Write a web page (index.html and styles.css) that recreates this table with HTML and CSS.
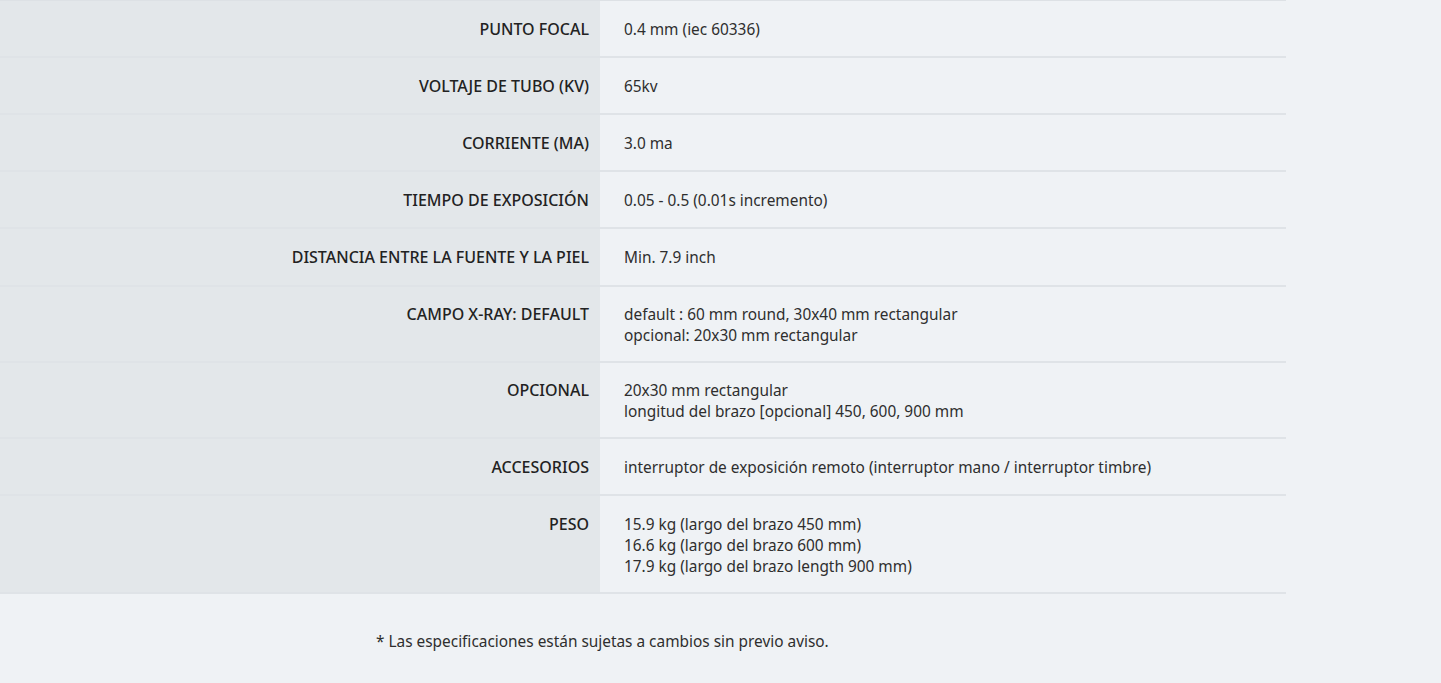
FILE: index.html
```html
<!DOCTYPE html>
<html lang="es">
<head>
<meta charset="utf-8">
<title>Especificaciones</title>
<link rel="stylesheet" href="styles.css">
</head>
<body>
<div class="page">
  <table class="specs">
    <tbody>
      <tr><th>PUNTO FOCAL</th><td>0.4 mm (iec 60336)</td></tr>
      <tr><th>VOLTAJE DE TUBO (KV)</th><td>65kv</td></tr>
      <tr><th>CORRIENTE (MA)</th><td>3.0 ma</td></tr>
      <tr><th>TIEMPO DE EXPOSICIÓN</th><td>0.05 - 0.5 (0.01s incremento)</td></tr>
      <tr class="tall"><th>DISTANCIA ENTRE LA FUENTE Y LA PIEL</th><td>Min. 7.9 inch</td></tr>
      <tr class="two"><th>CAMPO X-RAY: DEFAULT</th><td>default : 60 mm round, 30x40 mm rectangular<br>opcional: 20x30 mm rectangular</td></tr>
      <tr class="two"><th>OPCIONAL</th><td>20x30 mm rectangular<br>longitud del brazo [opcional] 450, 600, 900 mm</td></tr>
      <tr><th>ACCESORIOS</th><td>interruptor de exposición remoto (interruptor mano / interruptor timbre)</td></tr>
      <tr class="three"><th>PESO</th><td>15.9 kg (largo del brazo 450 mm)<br>16.6 kg (largo del brazo 600 mm)<br>17.9 kg (largo del brazo length 900 mm)</td></tr>
    </tbody>
  </table>
  <p class="note">* Las especificaciones están sujetas a cambios sin previo aviso.</p>
</div>
</body>
</html>
```

FILE: styles.css
```css
html, body {
  margin: 0;
  padding: 0;
  background: #eff2f5;
}
body {
  font-family: "Noto Sans", "Open Sans", sans-serif;
  color: #2e2e2e;
  font-size: 15.4px;
}
.page {
  width: 1441px;
  height: 683px;
  overflow: hidden;
}
.specs {
  width: 1286px;
  border-collapse: collapse;
  border-top: 1px solid #dde1e5;
}
.specs tr {
  border-bottom: 2px solid #dfe3e7;
}
.specs th, .specs td {
  vertical-align: top;
  padding: 18px 0 16px 0;
  line-height: 21px;
}
.specs th {
  width: 589px;
  padding-right: 11px;
  background: #e3e7ea;
  text-align: right;
  font-weight: 500;
  font-size: 16px;
  color: #222;
}
.specs td {
  background: #eff2f5;
  padding-left: 24px;
  text-align: left;
}
.specs tr.tall th, .specs tr.tall td {
  padding-bottom: 17px;
}
.specs tr.two th, .specs tr.two td {
  padding-top: 17px;
  padding-bottom: 15px;
}
.specs tr.three th, .specs tr.three td {
  padding-top: 18px;
  padding-bottom: 15px;
}
.note {
  margin: 0;
  padding: 37px 0 0 376px;
  line-height: 21px;
}
```
